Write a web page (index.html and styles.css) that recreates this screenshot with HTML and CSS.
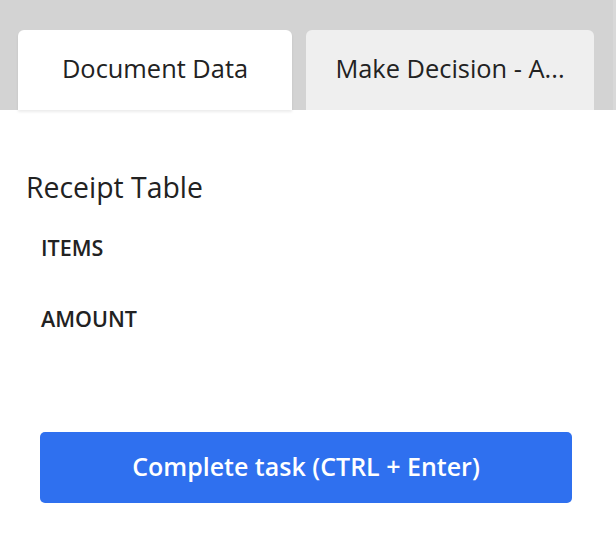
FILE: index.html
```html
<!DOCTYPE html>
<html>
<head>
<meta charset="utf-8">
<link rel="stylesheet" href="styles.css">
</head>
<body>
<div class="tabbar">
  <div class="tab active">Document Data</div>
  <div class="tab">Make Decision - A...</div>
  <div class="edge"></div>
</div>
<main class="content">
  <h2 class="title">Receipt Table</h2>
  <div class="field">ITEMS</div>
  <div class="field">AMOUNT</div>
  <button class="complete">Complete task (CTRL + Enter)</button>
</main>
</body>
</html>
```
FILE: styles.css
```css
* { box-sizing: border-box; }
html, body { margin: 0; padding: 0; background: #fff; }
body {
  font-family: "Open Sans", "Liberation Sans", sans-serif;
  color: #222;
  width: 616px;
  height: 556px;
  overflow: hidden;
}
.tabbar {
  position: relative;
  display: flex;
  gap: 14px;
  height: 110px;
  padding: 30px 0 0 18px;
  background: #d3d3d3;
}
.tab {
  height: 80px;
  border-radius: 6px 6px 0 0;
  display: flex;
  align-items: center;
  justify-content: center;
  font-size: 25.4px;
  background: #efefef;
  padding-bottom: 4px;
  white-space: nowrap;
}
.tab.active {
  width: 274px;
  background: #fff;
  box-shadow: 0 2px 3px rgba(0,0,0,0.08);
}
.tab:nth-child(2) { width: 288px; }
.edge {
  position: absolute;
  right: 0;
  top: 0;
  width: 3px;
  height: 110px;
  background: #d9d9d9;
}
.content {
  padding: 58px 44px 0 41px;
}
.title {
  margin: 0 0 0 -15px;
  font-size: 28.4px;
  font-weight: 400;
  line-height: 38px;
}
.field {
  margin-top: 28px;
  font-size: 21.5px;
  font-weight: 600;
  line-height: 28px;
}
.field + .field { margin-top: 43px; }
.complete {
  display: block;
  width: 532px;
  height: 71px;
  margin: 99px 0 0 -1px;
  border: 0;
  border-radius: 5px;
  background: #2f70ef;
  color: #fff;
  font-family: inherit;
  font-size: 25px;
  font-weight: 600;
  padding: 0 0 4px;
}
```
